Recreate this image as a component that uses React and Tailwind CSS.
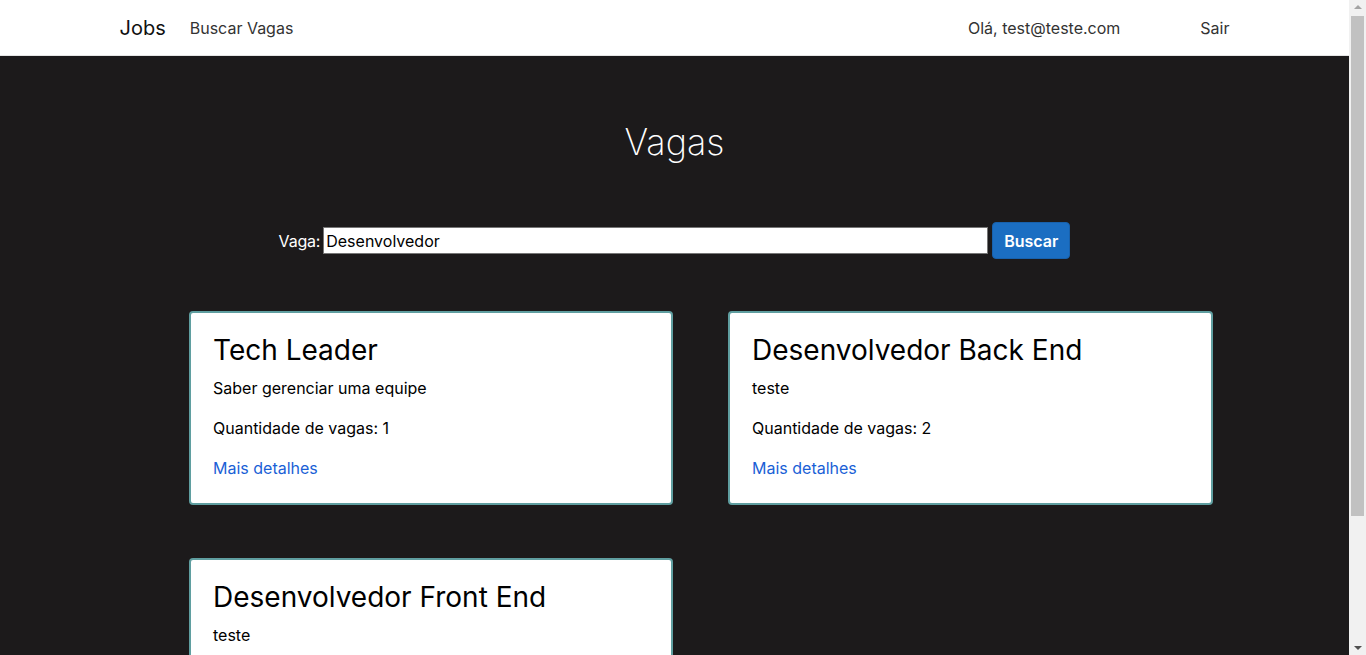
import React, { useState } from "react";

const vagas = [
  { titulo: "Tech Leader", descricao: "Saber gerenciar uma equipe", quantidade: 1 },
  { titulo: "Desenvolvedor Back End", descricao: "teste", quantidade: 2 },
  { titulo: "Desenvolvedor Front End", descricao: "teste", quantidade: 1 },
];

export default function App() {
  const [busca, setBusca] = useState("Desenvolvedor");

  return (
    <div className="h-screen flex overflow-hidden bg-[#1c1a1b] font-['Inter',sans-serif]">
      <div className="flex-1 min-w-0">
        <nav className="h-[56px] bg-white border-b border-[#e5e5e5]">
          <div className="max-w-[1140px] mx-auto px-[15px] h-full flex items-center">
            <a className="text-[20px] text-[#111] mr-[24px]">Jobs</a>
            <a className="text-[16px] text-[#333]">Buscar Vagas</a>
            <div className="ml-auto flex items-center">
              <span className="text-[16px] text-[#333]">Olá, test@teste.com</span>
              <a className="text-[16px] text-[#333] ml-[80px]">Sair</a>
            </div>
          </div>
        </nav>

        <main className="pb-[120px]">
          <h1 className="text-[36px] font-extralight text-white text-center pt-[64px] leading-[44px]">Vagas</h1>

          <div className="flex items-center justify-center mt-[58px] text-[16px]">
            <label className="text-white mr-[3px] tracking-[-0.2px]">Vaga:</label>
            <input
              value={busca}
              onChange={e => setBusca(e.target.value)}
              className="w-[665px] h-[27px] bg-white text-black border border-[#767676] px-[2px] outline-none"
            />
            <button className="ml-[4px] h-[37px] px-[11px] bg-[#1b6ec2] border border-[#1861ac] rounded text-white font-semibold">
              Buscar
            </button>
          </div>

          <div className="grid grid-cols-[484px_485px] gap-x-[55px] gap-y-[53px] ml-[189px] mt-[52px]">
            {vagas.map(v => (
              <div key={v.titulo} className="bg-white border-2 border-[#5f9ea0] rounded-[4px] px-[22px] pt-[19px] pb-[23px]">
                <h3 className="text-[28px] text-black leading-[36px]">{v.titulo}</h3>
                <p className="text-[16px] text-black mt-[8px] leading-[24px]">{v.descricao}</p>
                <p className="text-[16px] text-black mt-[16px] leading-[24px]">Quantidade de vagas: {v.quantidade}</p>
                <a className="block text-[16px] text-[#1a5fd6] mt-[16px] leading-[24px]">Mais detalhes</a>
              </div>
            ))}
          </div>
        </main>
      </div>

      {/* scrollbar */}
      <div className="w-[17px] shrink-0 bg-[#f1f1f1] flex flex-col items-center">
        <div className="h-[14px] flex items-center justify-center">
          <div className="w-0 h-0 border-x-[4px] border-x-transparent border-b-[4px] border-b-[#a3a3a3]" />
        </div>
        <div className="w-[13px] h-[500px] mt-[2px] bg-[#c1c1c1]" />
        <div className="mt-auto h-[14px] flex items-center justify-center">
          <div className="w-0 h-0 border-x-[4px] border-x-transparent border-t-[4px] border-t-[#505050]" />
        </div>
      </div>
    </div>
  );
}
